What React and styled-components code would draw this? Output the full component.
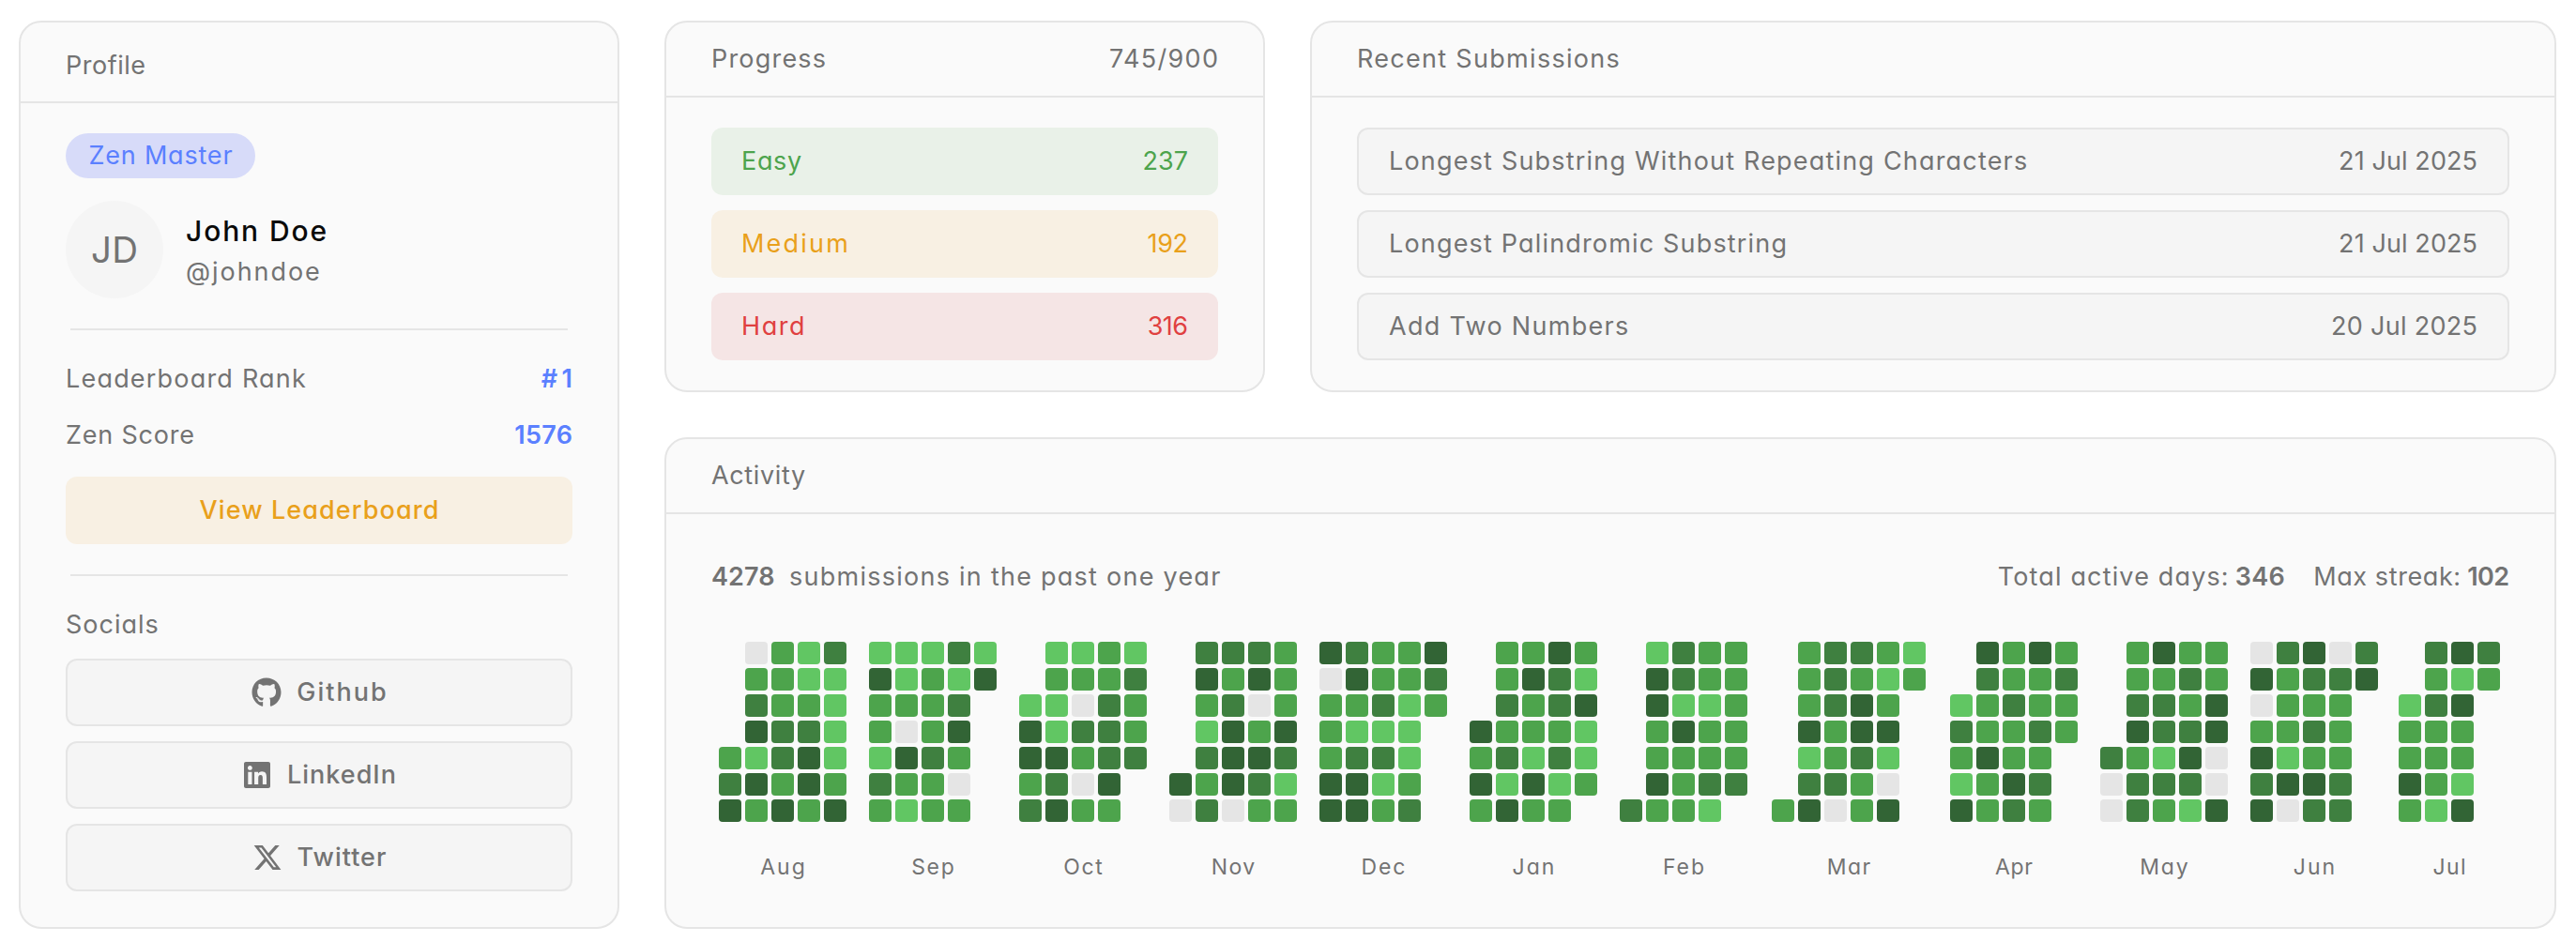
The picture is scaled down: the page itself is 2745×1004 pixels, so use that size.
import React from "react";
import styled, { createGlobalStyle } from "styled-components";
import { FaGithub, FaLinkedin, FaXTwitter } from "react-icons/fa6";

const GlobalStyle = createGlobalStyle`
  *, *::before, *::after { box-sizing: border-box; }
  body {
    margin: 0;
    background: #ffffff;
    color: #737373;
    font-family: Inter, "Open Sans", sans-serif;
    font-feature-settings: "cv11";
    font-size: 27px;
    line-height: 42px;
  }
`;

const line = "#e5e5e5";

const Dashboard = styled.main`
  display: grid;
  grid-template-columns: 640px 640px 1328px;
  grid-template-rows: 396px 524px;
  gap: 48px;
  padding: 22px 20px 14px;
`;

const Card = styled.section`
  display: flex;
  flex-direction: column;
  background: #fafafa;
  border: 2px solid ${line};
  border-radius: 24px;
  overflow: hidden;
`;

const ProfileCard = styled(Card)`
  grid-row: 1 / span 2;
`;

const ActivityCard = styled(Card)`
  grid-column: 2 / span 2;
`;

const CardHeader = styled.header`
  display: flex;
  justify-content: space-between;
  align-items: center;
  height: 80px;
  padding: 0 48px;
  border-bottom: 2px solid ${line};
`;

const ProfileHeader = styled(CardHeader)`
  height: 86px;
  padding: 8px 48px 0;
`;

const CardBody = styled.div`
  display: flex;
  flex-direction: column;
  padding: 32px 48px;
`;

const RowList = styled(CardBody)`
  gap: 16px;
`;

const Text = styled.span`
  white-space: nowrap;
  letter-spacing: ${(p) => p.$track || 0}px;
  margin-right: ${(p) => -(p.$track || 0)}px;
`;

const Strong = styled(Text)`
  font-weight: 600;
`;

const Badge = styled.div`
  align-self: flex-start;
  display: flex;
  align-items: center;
  justify-content: center;
  width: 202px;
  height: 48px;
  border-radius: 24px;
  background: #d7dbf9;
  color: #5b80ff;
`;

const Identity = styled.div`
  display: flex;
  align-items: center;
  gap: 24px;
  margin-top: 24px;
`;

const Avatar = styled.div`
  display: flex;
  align-items: center;
  justify-content: center;
  width: 104px;
  height: 104px;
  border-radius: 50%;
  background: #f5f5f5;
  font-size: 38.5px;
`;

const Names = styled.div`
  display: flex;
  flex-direction: column;
  gap: 1px;
  padding-top: 3px;
`;

const FullName = styled(Text)`
  color: #0a0a0a;
  font-size: 30px;
  font-weight: 500;
  line-height: 44px;
`;

const Divider = styled.hr`
  width: 530px;
  height: 2px;
  margin: 32px auto 31px;
  border: 0;
  background: ${line};
`;

const Stats = styled.div`
  display: flex;
  flex-direction: column;
  gap: 18px;
  margin-bottom: 23px;
`;

const Stat = styled.div`
  display: flex;
  justify-content: space-between;
`;

const StatValue = styled(Strong)`
  color: #5b80ff;
`;

const Button = styled.button`
  display: flex;
  align-items: center;
  justify-content: center;
  gap: 16px;
  height: 72px;
  padding: 0;
  border: 2px solid ${line};
  border-radius: 12px;
  background: #f5f5f5;
  color: #737373;
  font: inherit;
  font-feature-settings: inherit;
  font-weight: 500;

  svg { width: 32px; height: 32px; flex: none; }
`;

const LeaderboardButton = styled(Button)`
  border: 0;
  background: #f8f0e3;
  color: #e9a01b;
`;

const SocialsTitle = styled(Text)`
  margin-bottom: 15px;
`;

const Socials = styled.div`
  display: flex;
  flex-direction: column;
  gap: 16px;
`;

const Row = styled.div`
  display: flex;
  align-items: center;
  justify-content: space-between;
  height: 72px;
  padding: 0 32px;
  border-radius: 12px;
`;

const tones = {
  easy: ["#4da44d", "#e9f1e8"],
  medium: ["#e9a01b", "#f8f0e3"],
  hard: ["#e04040", "#f5e5e5"],
};

const DifficultyRow = styled(Row)`
  color: ${(p) => tones[p.$tone][0]};
  background: ${(p) => tones[p.$tone][1]};
`;

const SubmissionRow = styled(Row)`
  border: 2px solid ${line};
  background: #f5f5f5;
`;

const Summary = styled.div`
  display: flex;
  justify-content: space-between;
  padding-top: 14px;
`;

const SummaryGroup = styled.div`
  display: flex;
  gap: ${(p) => p.$gap}px;
`;

const Calendar = styled.div`
  display: flex;
  padding: 48px 0 0 8px;
`;

const Month = styled.div`
  display: flex;
  flex-direction: column;
  align-items: center;
  margin-left: ${(p) => p.$gap}px;
`;

const Days = styled.div`
  display: grid;
  grid-template-columns: repeat(${(p) => p.$weeks}, 24px);
  grid-auto-rows: 24px;
  gap: 4px;
`;

const levels = ["#e5e5e5", "#61c663", "#4da44c", "#3f8040", "#326435"];

const Day = styled.i`
  border-radius: 4px;
  background: ${(p) => levels[p.$level] || "transparent"};
`;

const MonthName = styled(Text)`
  margin-top: 31px;
  font-size: 23px;
  line-height: 34px;
`;

const months = [
  ["Aug", 0, 2, ".0213 .2211 .3221 .4331 21341 34242 42424"],
  ["Sep", 24, 1.7, "11131 41214 2223. 2024. 1432. 3220. 2122."],
  ["Oct", 24, 1.6, ".1121 .2223 11032 41332 44233 2304. 3422."],
  ["Nov", 24, 1.4, ".3332 .4242 .2302 .1424 .3443 42431 03022"],
  ["Dec", 24, 1.8, "43224 04223 22312 2111. 2331. 4412. 4423."],
  ["Jan", 24, 2, ".2242 .2431 .3234 42221 23131 41412 2422."],
  ["Feb", 24, 2, ".1322 .4322 .4112 .2422 .2222 .4233 3221."],
  ["Mar", 26, 1.5, ".23321 .23212 .2342. .4244. .1231. .3320. 24024."],
  ["Apr", 26, 0.6, ".4242 .3223 12322 32232 2422. 1243. 4232."],
  ["May", 24, 1.8, ".2422 .2232 .3324 .4334 32140 03330 03214"],
  ["Jun", 24, 2, "03403 42334 0222. 2232. 4122. 3443. 4033."],
  ["Jul", 22, 1.4, ".343 .212 134. 222. 222. 421. 214."],
];

const difficulties = [
  ["easy", "Easy", 0.66, "237", 0],
  ["medium", "Medium", 2.2, "192", -0.4],
  ["hard", "Hard", 1.6, "316", -0.6],
];

const submissions = [
  ["Longest Substring Without Repeating Characters", 1.19, "21 Jul 2025", 0.1],
  ["Longest Palindromic Substring", 1.17, "21 Jul 2025", 0.1],
  ["Add Two Numbers", 1.3, "20 Jul 2025", 0.3],
];

const socials = [
  [FaGithub, "Github", 2],
  [FaLinkedin, "LinkedIn", 1],
  [FaXTwitter, "Twitter", 1.02],
];

function MonthGrid({ name, gap, track, days }) {
  const rows = days.split(" ");
  return (
    <Month $gap={gap}>
      <Days $weeks={rows[0].length}>
        {rows.join("").split("").map((level, i) => (
          <Day key={i} $level={level} />
        ))}
      </Days>
      <MonthName $track={track}>{name}</MonthName>
    </Month>
  );
}

export default function App() {
  return (
    <>
      <GlobalStyle />
      <Dashboard>
        <ProfileCard>
          <ProfileHeader>
            <Text $track={0.5}>Profile</Text>
          </ProfileHeader>
          <CardBody>
            <Badge>
              <Text $track={0.8}>Zen Master</Text>
            </Badge>
            <Identity>
              <Avatar>
                <Text $track={0.3}>JD</Text>
              </Avatar>
              <Names>
                <FullName $track={1.9}>John Doe</FullName>
                <Text $track={1.95}>@johndoe</Text>
              </Names>
            </Identity>
            <Divider />
            <Stats>
              <Stat>
                <Text $track={1.2}>Leaderboard Rank</Text>
                <StatValue $track={4.5}>#1</StatValue>
              </Stat>
              <Stat>
                <Text $track={0.8}>Zen Score</Text>
                <StatValue $track={0.3}>1576</StatValue>
              </Stat>
            </Stats>
            <LeaderboardButton>
              <Text $track={1.1}>View Leaderboard</Text>
            </LeaderboardButton>
            <Divider />
            <SocialsTitle $track={1}>Socials</SocialsTitle>
            <Socials>
              {socials.map(([Icon, name, track]) => (
                <Button key={name}>
                  <Icon />
                  <Text $track={track}>{name}</Text>
                </Button>
              ))}
            </Socials>
          </CardBody>
        </ProfileCard>

        <Card>
          <CardHeader>
            <Text $track={1.2}>Progress</Text>
            <Text $track={1.3}>745/900</Text>
          </CardHeader>
          <RowList>
            {difficulties.map(([tone, label, track, count, countTrack]) => (
              <DifficultyRow key={tone} $tone={tone}>
                <Text $track={track}>{label}</Text>
                <Text $track={countTrack}>{count}</Text>
              </DifficultyRow>
            ))}
          </RowList>
        </Card>

        <Card>
          <CardHeader>
            <Text $track={1.3}>Recent Submissions</Text>
          </CardHeader>
          <RowList>
            {submissions.map(([title, track, date, dateTrack]) => (
              <SubmissionRow key={title}>
                <Text $track={track}>{title}</Text>
                <Text $track={dateTrack}>{date}</Text>
              </SubmissionRow>
            ))}
          </RowList>
        </Card>

        <ActivityCard>
          <CardHeader>
            <Text $track={0.64}>Activity</Text>
          </CardHeader>
          <CardBody>
            <Summary>
              <SummaryGroup $gap={15.5}>
                <Strong $track={0.1}>4278</Strong>
                <Text $track={1.25}>submissions in the past one year</Text>
              </SummaryGroup>
              <SummaryGroup $gap={30.5}>
                <SummaryGroup $gap={7}>
                  <Text $track={1.15}>Total active days:</Text>
                  <Strong $track={0.3}>346</Strong>
                </SummaryGroup>
                <SummaryGroup $gap={7}>
                  <Text $track={0.6}>Max streak:</Text>
                  <Strong $track={-0.6}>102</Strong>
                </SummaryGroup>
              </SummaryGroup>
            </Summary>
            <Calendar>
              {months.map(([name, gap, track, days]) => (
                <MonthGrid key={name} name={name} gap={gap} track={track} days={days} />
              ))}
            </Calendar>
          </CardBody>
        </ActivityCard>
      </Dashboard>
    </>
  );
}
